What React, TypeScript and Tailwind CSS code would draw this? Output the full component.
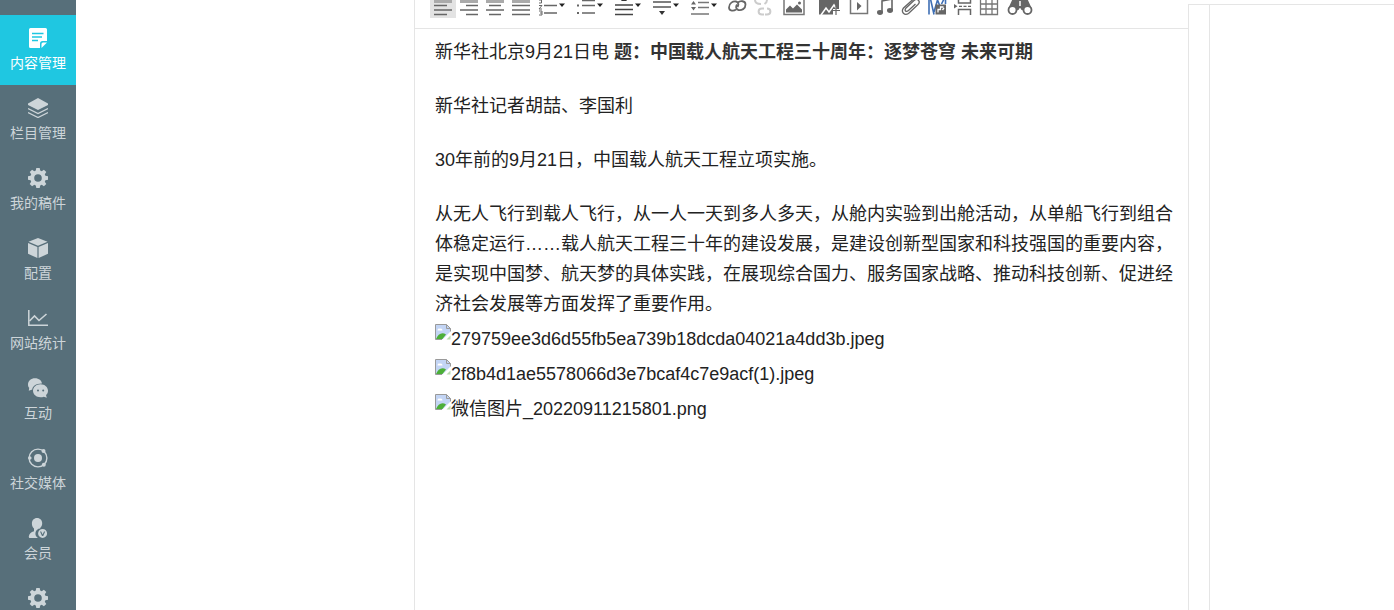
import React from 'react';
import clsx from 'clsx';

type Icon = React.FC;

const NavSvg: React.FC<{ children: React.ReactNode }> = ({ children }) => (
  <svg width="20" height="20" viewBox="0 0 20 20" fill="currentColor" aria-hidden="true">{children}</svg>
);

const DocIcon: Icon = () => (
  <NavSvg>
    <path d="M2.500 0h15A1.500 1.500 0 0 1 19 1.500V13h-4.500A2.500 2.500 0 0 0 12 15.500V20H2.500A1.500 1.500 0 0 1 1 18.500v-17A1.500 1.500 0 0 1 2.500 0z" />
    <path d="M13.500 20v-4a1.500 1.500 0 0 1 1.500-1.500h4z" />
    <path d="M4 5.500h11.500M4 9h10M4 12.500h6" stroke="#1fc7e1" strokeWidth="1.400" />
  </NavSvg>
);

const LayersIcon: Icon = () => (
  <NavSvg>
    <path d="M10 0l10 5.500v1.500l-10 5L0 7V5.500z" />
    <path d="M0 10.500l10 5 10-5M0 14.500l10 5 10-5" fill="none" stroke="currentColor" strokeWidth="1.300" />
  </NavSvg>
);

const GearIcon: Icon = () => (
  <NavSvg>
    <path
      fillRule="evenodd"
      d="M8.300 0h3.400l.5 2.600 1.500.6L15.900 1.700l2.400 2.400-1.500 2.200.6 1.500 2.600.5v3.400l-2.600.5-.6 1.500 1.500 2.200-2.400 2.400-2.200-1.500-1.500.6-.5 2.600H8.300l-.5-2.600-1.500-.6-2.200 1.500-2.400-2.400 1.500-2.200-.6-1.500L0 11.700V8.300l2.600-.5.6-1.500L1.700 4.100l2.400-2.400 2.200 1.500 1.500-.6zM10 6.200a3.800 3.800 0 1 0 0 7.600 3.800 3.800 0 0 0 0-7.600z"
    />
  </NavSvg>
);

const BoxIcon: Icon = () => (
  <NavSvg>
    <path d="M10 0l9.500 3.800L10 7.800.5 3.800zM0 5l9.400 4v11L0 15.800zM20 5l-9.400 4v11L20 15.800z" />
  </NavSvg>
);

const ChartIcon: Icon = () => (
  <NavSvg>
    <path d="M.8 2v15.300H20" fill="none" stroke="currentColor" strokeWidth="1.500" />
    <path d="M1.500 13L6.500 8l4.500 4.500 7.500-6.500" fill="none" stroke="currentColor" strokeWidth="1.600" />
  </NavSvg>
);

const ChatIcon: Icon = () => (
  <NavSvg>
    <path d="M7 .3c4 0 6.700 2.500 7 5.200C8.500 5.200 4.300 8.200 4.300 11.500L.8 12.800l.4-3C.4 9 0 8 0 6.500 0 3 3 .3 7 .3z" />
    <path
      fillRule="evenodd"
      d="M12.500 6.300c4.200 0 7.500 2.900 7.500 6.500 0 1.800-.7 3.200-2 4.300l.8 2.600-3-1c-1 .4-2.100.6-3.300.6-4.200 0-7.500-2.900-7.500-6.500s3.300-6.500 7.500-6.500zM10 11.500a1 1 0 1 0 0 2 1 1 0 0 0 0-2zm5.200 0a1 1 0 1 0 0 2 1 1 0 0 0 0-2z"
    />
  </NavSvg>
);

const OrbitIcon: Icon = () => (
  <NavSvg>
    <circle cx="10" cy="10" r="8.900" fill="none" stroke="currentColor" strokeWidth="1.400" />
    <circle cx="10" cy="10" r="4" />
    <circle cx="1.800" cy="10" r="1.800" />
    <circle cx="15.500" cy="3" r="2" />
    <circle cx="15.800" cy="16.700" r="2" />
  </NavSvg>
);

const MemberIcon: Icon = () => (
  <NavSvg>
    <path d="M9 0c3.200 0 5.200 2.300 5.200 5.200 0 2-.8 3.700-2 4.800v.4A5.200 5.200 0 0 0 9.900 20H2c-1 0-1.300-.6-1.200-1.500C1 16 3 14 6 13.200V10.500C4.500 9.300 3.900 7.500 3.900 5.200 3.900 2.300 6 0 9 0z" />
    <path
      fillRule="evenodd"
      d="M14.600 10.900a4.500 4.500 0 1 1 0 9 4.500 4.500 0 0 1 0-9zm-2.600 2.500l2 4.500h1.200l2-4.500H16l-1.400 3.200-1.400-3.200z"
    />
  </NavSvg>
);

const navItems: { label: string; icon: Icon; hideLabel?: boolean }[] = [
  { label: '内容管理', icon: DocIcon },
  { label: '栏目管理', icon: LayersIcon },
  { label: '我的稿件', icon: GearIcon },
  { label: '配置', icon: BoxIcon },
  { label: '网站统计', icon: ChartIcon },
  { label: '互动', icon: ChatIcon },
  { label: '社交媒体', icon: OrbitIcon },
  { label: '会员', icon: MemberIcon },
  { label: '设置', icon: GearIcon, hideLabel: true },
];

const gray = '#666';

const Lines: React.FC<{ d: string; color?: string }> = ({ d, color = gray }) => (
  <path d={d} stroke={color} strokeWidth="1.600" fill="none" />
);

// alignment icons share a half-faded first bar
const TopBar: React.FC = () => <path d="M2 6.500h18" stroke="#aaa" strokeWidth="3" />;

const tools: { name: string; size: string; width?: number; caret?: boolean; active?: boolean; art: React.ReactNode }[] = [
  { name: '左对齐', size: 'w-[26px]', active: true, art: <><TopBar /><Lines d="M2 10.500h13M2 15h18M2 19.500h13" /></> },
  { name: '右对齐', size: 'w-[26px]', art: <><TopBar /><Lines d="M8 10.500h12M2 15h18M8 19.500h12" /></> },
  { name: '居中', size: 'w-[26px]', art: <><TopBar /><Lines d="M5 10.500h12M2 15h18M5 19.500h12" /></> },
  { name: '两端对齐', size: 'w-[26px]', art: <><TopBar /><Lines d="M2 10.500h18M2 15h18M2 19.500h18" /></> },
  {
    name: '有序列表', size: 'w-[38px]', caret: true,
    art: <><Lines d="M7 10.500h13M7 18h13" /><path d="M2 5h2.500v3H2M2 10.500h3l-3 3.500h3M2 16h3v4H2M3 18h2" stroke={gray} fill="none" /></>,
  },
  {
    name: '无序列表', size: 'w-[38px]', caret: true,
    art: <><Lines d="M7 10.500h13M7 18h13M7 5.500h13" /><path d="M2 9.500h2v2H2zM2 17h2v2H2z" fill={gray} /></>,
  },
  { name: '段前距', size: 'w-[38px]', caret: true, art: <><Lines d="M2 10h18M2 14.500h18M2 19.500h18" color="#444" /><path d="M8 6h6l-3-4z" fill="#333" /></> },
  { name: '段后距', size: 'w-[38px]', caret: true, art: <><Lines d="M2 7h18M2 12h18" color="#555" /><path d="M8 16h6l-3 4z" fill="#333" /></> },
  {
    name: '行间距', size: 'w-[38px]', caret: true,
    art: <><Lines d="M9 7.500h11M9 12.500h11M2 19h18" color="#777" /><path d="M2 9.500L4.500 6 7 9.500zM2 12l2.500 3.500L7 12z" fill={gray} /></>,
  },
  {
    name: '超链接', size: 'w-[26px]',
    art: <path d="M10 14.500c-2 1.500-7 2-7-2C3 8 7 6 10 6.500c2.500.5 3 3.500 1.500 5.500M12 7.500c2-2 7.500-2 7.500 2 0 4.500-4 6-7 5.500-2.500-.5-3-3.500-1.500-5.500" stroke={gray} strokeWidth="1.800" fill="none" />,
  },
  {
    name: '取消链接', size: 'w-[26px]',
    art: <path d="M3 5c0 3 2.500 4 6 4M15 5c0 1.500-1 3-2.500 4M12 13.500h-2c-4.500 0-4.500 6 0 6h2M15 13.500c4.500 0 4.500 6 0 6h-2" stroke="#ccc" strokeWidth="2" fill="none" />,
  },
  {
    name: '图片', size: 'w-[36px]',
    art: <><path d="M1 2h20v17.500H1z" stroke="#777" strokeWidth="1.500" fill="none" /><path d="M3 17.500v-3l4-4 3 3 4-4 5 5v3z" fill={gray} /><circle cx="16.500" cy="8" r="1.500" fill={gray} /></>,
  },
  {
    name: '多图上传', size: 'w-[34px]',
    art: <><path d="M1 2h20v12h-6v5.500H1z" fill={gray} /><path d="M3 20l5-7 3 4 5-7 2 3.500" stroke="#fff" strokeWidth="1.500" fill="none" /><path d="M14.500 15.500h7.500M18 11v9" stroke={gray} strokeWidth="1.200" /></>,
  },
  {
    name: '视频', size: 'w-[26px]',
    art: <><path d="M2.500 3h17v15.500h-17z" stroke="#777" strokeWidth="1.500" fill="none" /><path d="M9 7v8.500l4.500-4.500z" fill={gray} /></>,
  },
  {
    name: '音乐', size: 'w-[26px]',
    art: <><path d="M8 17V6l10-2v12" stroke={gray} strokeWidth="1.600" fill="none" /><ellipse cx="6" cy="17.500" rx="3" ry="2.400" fill={gray} /><ellipse cx="16" cy="15.500" rx="3" ry="2.400" fill={gray} /></>,
  },
  {
    name: '附件', size: 'w-[26px]',
    art: <path d="M14 3.500L3.500 13c-3 4 1 8 5 5.500L18 9.500c3-3-.5-7-4-4l-8 7.500c-2 2.500 0 4.500 2.500 2.500l7-6.500" stroke={gray} strokeWidth="1.300" fill="none" />,
  },
  {
    name: 'Word 图片', size: 'w-[26px]',
    art: <><path d="M3 3v16.500M4.500 4l3.500 15.500M8 17l3.500-12 2 5M15.500 9L18 4M19.500 3v6" stroke="#3f6fb5" strokeWidth="1.600" fill="none" /><path d="M9.500 9.500H20v10H9.500z" fill={gray} /><path d="M12 17.500v-3h2.500v-2.500h3M16.500 15l1.500-2" stroke="#fff" strokeWidth="1.300" fill="none" /></>,
  },
  {
    name: '分页符', size: 'w-[26px]',
    art: <><path d="M6.500 4v4h12V4M6.500 20v-5.500h12V20" stroke={gray} strokeWidth="1.500" fill="none" /><path d="M7 11.300h13" stroke={gray} strokeWidth="1.200" strokeDasharray="3 1.500" /><path d="M2 9v4.600l3.500-2.300z" fill={gray} /></>,
  },
  {
    name: '表格', size: 'w-[26px]',
    art: <path d="M2.500 3h17v16.500h-17zM2.500 9h17M2.500 14h17M8 5v14M14 5v14" stroke="#777" strokeWidth="1.300" fill="none" />,
  },
  {
    name: '查找替换', size: 'w-[36px]', width: 26,
    art: <><path d="M6 3h4l2 2h2l2-2h4l4.500 10-5.500 4-4-2h-4l-4 2-5.500-4z" fill={gray} /><circle cx="5.500" cy="15" r="4" fill="#fff" stroke={gray} strokeWidth="1.800" /><circle cx="20.500" cy="15" r="4" fill="#fff" stroke={gray} strokeWidth="1.800" /><path d="M13 6v5" stroke="#fff" strokeWidth="1.500" /><circle cx="13" cy="14.500" r="1.200" fill="#fff" /></>,
  },
];

const BrokenImage: React.FC = () => (
  <svg width="16" height="16" viewBox="0 0 16 16" className="shrink-0" aria-hidden="true">
    <path d="M.5.5h11l4 4V9L9 15.500H.5z" fill="#c3d5f5" />
    <path d="M2.500 6.500c0-2 2-2.500 2.500-1.500 1-1 2.500 0 2.500 1.500z" fill="#fff" />
    <path d="M1 15c2-5 6-7.500 10-4.500L7.500 15z" fill="#4caf38" />
    <path d="M16 7v2.500L9.500 16H7z" fill="#fff" />
    <path d="M15.500 7.500v-3l-4-4H.5v15H7M11.500.5v4h4" fill="none" stroke="#9a9a9a" />
    <path d="M15.500 11.500v4h-4z" fill="#b9dcae" />
  </svg>
);

const images = [
  '279759ee3d6d55fb5ea739b18dcda04021a4dd3b.jpeg',
  '2f8b4d1ae5578066d3e7bcaf4c7e9acf(1).jpeg',
  '微信图片_20220911215801.png',
];

const Sidebar: React.FC = () => (
  <nav className="w-[76px] h-screen shrink-0 overflow-hidden bg-[#576f7a] pt-[15px] font-['Noto_Sans_CJK_SC',sans-serif]">
    {navItems.map(({ label, icon: ItemIcon, hideLabel }, i) => (
      <a
        key={label}
        href="#"
        aria-label={label}
        className={clsx(
          'flex h-[70px] flex-col items-center gap-1 pt-[13px] text-sm leading-5',
          i === 0 ? 'bg-[#1fc7e1] text-white' : 'text-[#cdd5d9]'
        )}
      >
        <ItemIcon />
        {!hideLabel && <span>{label}</span>}
      </a>
    ))}
  </nav>
);

const Toolbar: React.FC = () => (
  <div className="flex h-[29px] items-end overflow-hidden border-b border-[#e5e5e5] pb-[10px] pl-[15px]">
    {tools.map((tool) => (
      <button
        key={tool.name}
        type="button"
        aria-label={tool.name}
        className={clsx(
          'flex h-[26px] shrink-0 items-center pt-0.5',
          tool.size,
          tool.caret ? 'pl-[3px]' : 'justify-center',
          tool.active && 'bg-[#e3e3e3]'
        )}
      >
        <svg width={tool.width ?? 22} height="22" viewBox={`0 0 ${tool.width ?? 22} 22`} className="shrink-0">{tool.art}</svg>
        {tool.caret && (
          <svg width="7" height="22" viewBox="0 0 7 22" className="shrink-0">
            <path d="M0 8.500h6l-3 3.500z" fill="#222" />
          </svg>
        )}
      </button>
    ))}
  </div>
);

const App: React.FC = () => {
  return (
    <div className="flex min-h-screen overflow-hidden bg-white">
      <Sidebar />
      <main className="flex flex-1 pl-[338px]">
        <section className="min-w-0 flex-1 border-l border-[#e5e5e5]">
          <Toolbar />
          <article className="pt-2 pr-3 pl-5 font-['Liberation_Sans','Noto_Sans_CJK_SC',sans-serif] text-lg leading-[30px] text-[#222]">
            <p className="mb-6">
              新华社北京9月21日电 <strong className="text-[#333]">题：中国载人航天工程三十周年：逐梦苍穹 未来可期</strong>
            </p>
            <p className="mb-6">新华社记者胡喆、李国利</p>
            <p className="mb-6">30年前的9月21日，中国载人航天工程立项实施。</p>
            <p>
              从无人飞行到载人飞行，从一人一天到多人多天，从舱内实验到出舱活动，从单船飞行到组合体稳定运行……载人航天工程三十年的建设发展，是建设创新型国家和科技强国的重要内容，是实现中国梦、航天梦的具体实践，在展现综合国力、服务国家战略、推动科技创新、促进经济社会发展等方面发挥了重要作用。
            </p>
            <div className="mt-[5px] flex flex-col gap-[5px]">
              {images.map((name) => (
                <div key={name} className="flex items-start">
                  <BrokenImage />
                  <span>{name}</span>
                </div>
              ))}
            </div>
          </article>
        </section>
        <aside className="mt-1 flex w-[206px] shrink-0 border-t border-l border-[#e5e5e5] pl-5">
          <div className="flex-1 border-l border-[#e5e5e5]" />
        </aside>
      </main>
    </div>
  );
};

export default App;
